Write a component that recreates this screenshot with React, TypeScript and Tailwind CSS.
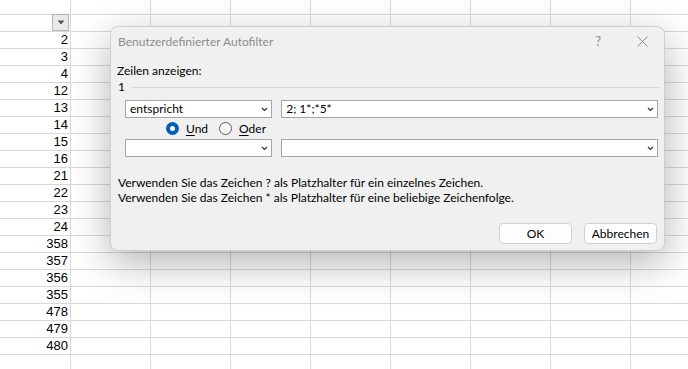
import { useState } from 'react';

const werte = [2, 3, 4, 12, 13, 14, 15, 16, 21, 22, 23, 24, 358, 357, 356, 355, 478, 479, 480, 0];
const spalten = [0, 1, 2, 3, 4, 5, 6, 7];

function Chevron() {
  return (
    <svg width="7" height="5" viewBox="0 0 7 5" className="shrink-0">
      <path d="M1 1 L3.5 3.5 L6 1" fill="none" stroke="#333" strokeWidth="1.2" />
    </svg>
  );
}

function Combo({ value, className }: { value?: string; className: string }) {
  return (
    <div
      className={`h-[18px] flex items-center bg-white border border-[#a5a5a5] pl-[4px] pr-[3px] text-[12px] text-black ${className}`}
    >
      <span className="flex-1 whitespace-nowrap overflow-hidden leading-[16px]">{value}</span>
      <Chevron />
    </div>
  );
}

function Radio({ checked, label, u }: { checked: boolean; label: string; u: string }) {
  return (
    <div className="flex items-center gap-[7px]">
      {checked ? (
        <div className="w-[13px] h-[13px] rounded-full bg-[#005fb8] flex items-center justify-center">
          <div className="w-[5px] h-[5px] rounded-full bg-white" />
        </div>
      ) : (
        <div className="w-[13px] h-[13px] rounded-full border border-[#5c5c5c] bg-[#f7f7f7]" />
      )}
      <span className="text-[12px] text-black">
        <span className="underline underline-offset-2">{u}</span>
        {label.slice(1)}
      </span>
    </div>
  );
}

function Zeile({ children, h }: { children?: React.ReactNode; h: string }) {
  return (
    <div className={`${h} flex shrink-0 border-b border-[#d9d9d9]`}>
      <div className="w-[71px] shrink-0 border-r border-[#d9d9d9] flex justify-end">{children}</div>
      {spalten.map((c) => (
        <div key={c} className="w-[80px] shrink-0 border-r border-[#d9d9d9]" />
      ))}
    </div>
  );
}

export default function App() {
  const [modus, setModus] = useState('und');

  return (
    <div className="relative w-[688px] h-[369px] overflow-hidden bg-white font-['Liberation_Sans',sans-serif]">
      {/* Tabellenraster */}
      <div className="flex flex-col">
        <Zeile h="h-[15px]" />
        <Zeile h="h-[17px]">
          <div className="w-[17px] h-[17px] -mt-[1px] mr-[1px] bg-[#e9e9e9] border border-[#b4b4b4] flex items-center justify-center">
            <svg width="8" height="5" viewBox="0 0 8 5">
              <path d="M0.5 0.5 H7.5 L4 4.5 Z" fill="#555" />
            </svg>
          </div>
        </Zeile>
        {werte.map((w, i) => (
          <Zeile key={i} h="h-[17px]">
            <span className="pr-[2px] text-[13px] leading-[16px] text-black">{w || ''}</span>
          </Zeile>
        ))}
      </div>

      {/* Dialog */}
      <div className="absolute left-[110px] top-[26px] w-[555px] h-[225px] rounded-[8px] bg-[#f0f0f0] border border-[#cfcfcf] shadow-[0_12px_40px_rgba(0,0,0,0.3)] font-['Lato',sans-serif] flex flex-col">
        <div className="h-[29px] flex items-center pl-[7px] pr-[16px]">
          <span className="flex-1 text-[12px] text-[#8c8c8c]">Benutzerdefinierter Autofilter</span>
          <span className="text-[13px] text-[#8c8c8c] mr-[36px]">?</span>
          <svg width="11" height="11" viewBox="0 0 11 11">
            <path d="M0.5 0.5 L10.5 10.5 M10.5 0.5 L0.5 10.5" stroke="#8c8c8c" strokeWidth="1" />
          </svg>
        </div>

        <div className="px-[6px]">
          <div className="mt-[7px] text-[12px] leading-[16px] text-black">Zeilen anzeigen:</div>
          <div className="flex items-center h-[16px] text-[12px] text-black">
            <span className="pl-[1px]">1</span>
            <div className="flex-1 h-px bg-[#d6d6d6] ml-[6px] mr-[-1px]" />
          </div>

          <div className="mt-[5px] pl-[8px] flex gap-[9px]">
            <Combo value="entspricht" className="w-[148px]" />
            <Combo value="2; 1*;*5*" className="w-[379px]" />
          </div>

          <div
            className="h-[21px] pl-[49px] flex items-center gap-[11px]"
            onClick={() => setModus(modus === 'und' ? 'oder' : 'und')}
          >
            <Radio checked={modus === 'und'} label="Und" u="U" />
            <Radio checked={modus === 'oder'} label="Oder" u="O" />
          </div>

          <div className="pl-[8px] flex gap-[9px]">
            <Combo className="w-[148px]" />
            <Combo className="w-[379px]" />
          </div>

          <div className="mt-[18px] pl-[1px] text-[12px] leading-[15px] text-black">
            <p>Verwenden Sie das Zeichen ? als Platzhalter für ein einzelnes Zeichen.</p>
            <p>Verwenden Sie das Zeichen * als Platzhalter für eine beliebige Zeichenfolge.</p>
          </div>

          <div className="mt-[18px] flex justify-end gap-[12px] pr-[1px]">
            <button className="w-[73px] h-[21px] rounded-[4px] bg-[#fdfdfd] border border-[#d0d0d0] text-[12px] text-black">
              OK
            </button>
            <button className="w-[73px] h-[21px] rounded-[4px] bg-[#fdfdfd] border border-[#d0d0d0] text-[12px] text-black">
              Abbrechen
            </button>
          </div>
        </div>
      </div>
    </div>
  );
}
